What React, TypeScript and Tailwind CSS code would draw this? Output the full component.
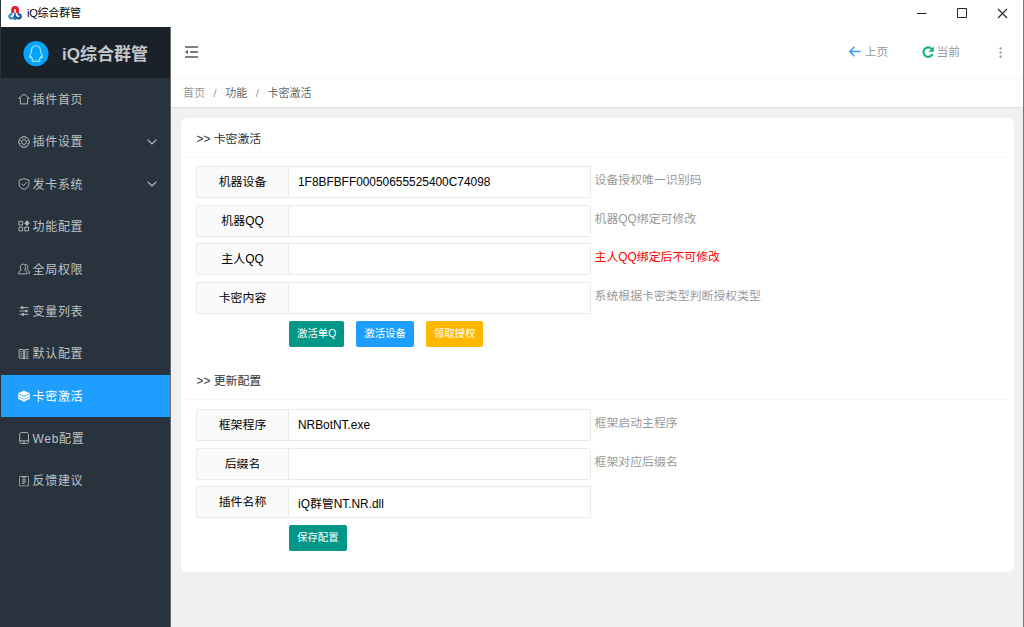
import type {ReactNode} from 'react';
import clsx from 'clsx';

const iconPaths: Record<string, ReactNode> = {
    home: <path d="M8 1.5L.8 7h2.400v7.500h9.600V7h2.400L8 1.500z" />,
    gear: (
        <>
            <path d="M6.400.8h3.200l.4 2 1.900-1 2.200 2.200-1 1.900 2 .5v3.200l-2 .5 1 1.900-2.200 2.200-1.900-1-.4 2H6.400l-.4-2-1.900 1L1.900 12l1-1.900-2-.5V6.400l2-.5-1-1.900 2.200-2.200 1.900 1z" />
            <circle cx="8" cy="8" r="3.200" />
        </>
    ),
    shield: <path d="M8 .8l6.500 2v5.900c0 3-2.900 5.300-6.500 6.500-3.600-1.200-6.500-3.500-6.500-6.500V2.800L8 .8zM4.800 7.600l2.500 2.500 4.200-4.200" />,
    component: (
        <>
            <path d="M1.200 1.700h5v5h-5zM1.200 9.500h5v5h-5zM9 9.500h5v5H9z" />
            <path d="M12 .4l3.700 3.800L12 8 8.300 4.200z" fill="currentColor" stroke="none" />
        </>
    ),
    user: <path d="M.8 14.500c0-3 1.600-4.300 3.500-5C2 6 3 1.500 6.600 1.500S11 6 8.800 9.500c2 .7 3 2 3 5H.8zM9.500 1.800c3.600-.3 5 4 2.300 7 2 .8 3.500 2.300 3.500 5.200h-2" />,
    slider: (
        <>
            <path d="M2 3.500h12M2 8h12M2 12.500h12" />
            <path d="M4.500 1.800h2.600v3.400H4.500zM9.400 6.300H12v3.400H9.400zM5.500 10.800h2.600v3.400H5.500z" fill="currentColor" stroke="none" />
        </>
    ),
    read: <path d="M8 3v11.500M1.500 2h4L8 3v11.500l-2.500-1h-4zM14.500 2h-4L8 3v11.500l2.500-1h4M3.200 5h2.500M3.200 7.700h2.500M3.200 10.500h2.500M10 5.200h4M10 8h4M10 11h4" />,
    layers: (
        <>
            <path d="M8 .6l8 3.700-8 3.800-8-3.800z" fill="currentColor" stroke="none" />
            <path d="M0 5.200l8 3.700 8-3.700v3l-8 3.700-8-3.700z" fill="currentColor" stroke="none" />
            <path d="M0 9.100l8 3.700 8-3.700v2.700l-8 3.800-8-3.800z" fill="currentColor" stroke="none" />
        </>
    ),
    phone: <path d="M4.500.8h7.300c1.300 0 2.200.9 2.200 2.200v10c0 1.300-.9 2.200-2.200 2.200H4.500c-1.300 0-2.300-.9-2.300-2.200V3c0-1.300 1-2.200 2.300-2.200zM2.200 11.800H14M8 12v3" />,
    form: <path d="M2 2h12v12.500H2zM6 1v2.500h4V1M5 6.500h6M5 9h6M5 11.500h3M8 4v8" strokeWidth="1" />,
};

const menuItems = [
    {icon: 'home', label: '插件首页'},
    {icon: 'gear', label: '插件设置', expandable: true},
    {icon: 'shield', label: '发卡系统', expandable: true},
    {icon: 'component', label: '功能配置'},
    {icon: 'user', label: '全局权限'},
    {icon: 'slider', label: '变量列表'},
    {icon: 'read', label: '默认配置'},
    {icon: 'layers', label: '卡密激活', active: true},
    {icon: 'phone', label: 'Web配置'},
    {icon: 'form', label: '反馈建议'},
];

const activationFields = [
    {label: '机器设备', value: '1F8BFBFF00050655525400C74098', hint: '设备授权唯一识别码'},
    {label: '机器QQ', value: '', hint: '机器QQ绑定可修改'},
    {label: '主人QQ', value: '', hint: '主人QQ绑定后不可修改', warn: true},
    {label: '卡密内容', value: '', hint: '系统根据卡密类型判断授权类型'},
];

const updateFields = [
    {label: '框架程序', value: 'NRBotNT.exe', hint: '框架启动主程序'},
    {label: '后缀名', value: '', hint: '框架对应后缀名'},
    {label: '插件名称', value: 'iQ群管NT.NR.dll', hint: ''},
];

interface Field {
    label: string;
    value: string;
    hint: string;
    warn?: boolean;
}

const FieldRow = ({label, value, hint, warn}: Field) => (
    <div className="flex h-8 items-center">
        <label className="flex h-8 w-[93px] shrink-0 items-center justify-center rounded-l-xs border border-[#eaeaea] bg-[#fafafa] pt-0.5 text-black">
            {label}
        </label>
        <input
            className="h-8 w-[302px] shrink-0 rounded-r-xs border border-l-0 border-[#eaeaea] bg-white px-[9px] text-black outline-none"
            defaultValue={value}
        />
        <span className={clsx('ml-[3.500px] pb-0.5 whitespace-nowrap', warn ? 'text-[#ff0000]' : 'text-[#999]')}>{hint}</span>
    </div>
);

const SectionTitle = ({children}: {children: ReactNode}) => (
    <div className="mr-1.5 ml-1 flex h-10 items-center border-b border-[#f6f6f6] pt-1 pl-[12px] text-[#333]">
        {children}
    </div>
);

const TitleBar = () => (
    <div className="flex h-[27px] shrink-0 items-center bg-white pb-px pl-[7px]">
        <svg className="h-[15px] w-[14px]" viewBox="0 0 14 15" fill="none">
            <path d="M4.700 7V3.500c0-1.600.9-2 2.300-2s2.500.4 2.500 2V7" stroke="#e0202c" strokeWidth="3" />
            <path d="M4.500 8C2 8 1.300 9.200 1.300 10.800s3 2.300 4.600.8L8 9.500" stroke="#2f8fd4" strokeWidth="2.200" />
            <path d="M9.500 8c2.500 0 3.300 1.200 3.300 2.800s-3 2.300-4.600.8L6 9.500" stroke="#174f96" strokeWidth="2.200" />
            <path d="M7 6.500V14" stroke="#2463aa" strokeWidth="1.600" />
        </svg>
        <span className="ml-[5px] pt-px text-[11px] tracking-[-0.200px] text-black">iQ综合群管</span>
        <div className="mr-[15.500px] ml-auto flex items-center gap-[30px] text-[#222]">
            <svg className="h-2.5 w-2.5" viewBox="0 0 10 10" stroke="currentColor">
                <path d="M0 5.500h9.500" />
            </svg>
            <svg className="h-2.5 w-2.5" viewBox="0 0 10 10" fill="none" stroke="currentColor">
                <path d="M.5.5h9v9h-9z" />
            </svg>
            <svg className="h-[11px] w-[11px]" viewBox="0 0 11 11" stroke="currentColor" strokeWidth="1.100">
                <path d="M1 1l9 9M10 1l-9 9" />
            </svg>
        </div>
    </div>
);

const Sidebar = () => (
    <aside className="w-[170px] shrink-0 border-r border-[#656c74] bg-[#28333e]">
        <div className="flex h-[51px] items-center bg-[#1b2129] pb-px pl-[22px]">
            <svg className="mt-1 h-[26px] w-[26px]" viewBox="0 0 26 26" fill="none">
                <circle cx="13" cy="12.600" r="12.600" fill="#06a4fa" />
                <path
                    d="M13 4.800c-3 0-4.500 2.200-4.500 5 0 1.300-.4 2-1 3.200-.7 1.500-1 3.300-.4 3.800.5.300 1-.6 1.300-.9.300 1.100.8 1.900 1.400 2.500-1.300.7-1.200 2 .6 2 1.200 0 2-.3 2.600-.8.600.5 1.400.8 2.600.8 1.800 0 1.900-1.300.6-2 .6-.6 1.100-1.400 1.400-2.500.3.300.8 1.200 1.300.9.600-.5.300-2.300-.4-3.800-.6-1.200-1-1.900-1-3.200 0-2.800-1.500-5-4.500-5z"
                    stroke="#a5e8ff"
                    strokeWidth="1.100"
                />
            </svg>
            <span className="mt-[5px] ml-[13px] text-[17px] leading-6 font-bold text-[#c3c5c8]">iQ综合群管</span>
        </div>
        <nav>
            {menuItems.map((item) => (
                <a
                    key={item.label}
                    className={clsx(
                        'flex h-[42.400px] items-center pl-[16.500px] text-xs tracking-[0.700px]',
                        item.active ? 'bg-[#1e9fff] text-white' : 'text-[#bec2c5]'
                    )}
                >
                    <svg
                        className={clsx('mr-[3px] h-3 w-3', !item.active && 'opacity-90')}
                        viewBox="0 0 16 16"
                        fill="none"
                        stroke="currentColor"
                        strokeWidth="1.300"
                    >
                        {iconPaths[item.icon]}
                    </svg>
                    <span className="pt-[1.500px]">{item.label}</span>
                    {item.expandable && (
                        <svg className="mr-[13px] ml-auto h-[6px] w-[10px]" viewBox="0 0 10 6" fill="none" stroke="currentColor" strokeWidth="1.100">
                            <path d="M.6.6L5 5 9.400.6" />
                        </svg>
                    )}
                </a>
            ))}
        </nav>
    </aside>
);

const Header = () => (
    <header className="flex h-[51px] shrink-0 items-center bg-white pr-[20.500px] pb-px pl-[14px] text-[11.700px] text-[#999]">
        <svg className="h-3 w-[13px]" viewBox="0 0 13 12" fill="none" stroke="#555" strokeWidth="1.500">
            <path d="M0 1h13M5 6h8M0 11h13" />
            <path d="M0 6l3-2v4z" fill="#555" stroke="none" />
        </svg>
        <div className="ml-auto flex items-center">
            <svg className="mr-1 h-[11px] w-3" viewBox="0 0 12 11" fill="none" stroke="#3a9cf5" strokeWidth="1.500">
                <path d="M11.500 5.500H1M5.300.8L.9 5.500l4.400 4.700" />
            </svg>
            上页
        </div>
        <div className="ml-[33.500px] flex items-center">
            <svg className="mr-[3px] h-3 w-3" viewBox="0 0 12 12" fill="none">
                <path d="M10.500 8A4.700 4.700 0 1 1 9.500 2.700" stroke="#16b777" strokeWidth="2.200" />
                <path d="M11.900.3v5.500H6.400z" fill="#16b777" />
            </svg>
            当前
        </div>
        <svg className="ml-[37.500px] h-[11px] w-[5px]" viewBox="0 0 5 11" fill="#888">
            <circle cx="2.500" cy="1.300" r="1.100" />
            <circle cx="2.500" cy="5.500" r="1.100" />
            <circle cx="2.500" cy="9.700" r="1.100" />
        </svg>
    </header>
);

const buttonClass = 'h-[26px] rounded-xs px-2 pt-px text-[10.400px] text-white whitespace-nowrap';

export default function App() {
    return (
        <div className="flex h-screen flex-col overflow-hidden border-r border-l border-r-[#777] border-l-[#28333e] bg-[#f0f0f0] font-['Liberation_Sans','Noto_Sans_CJK_SC',sans-serif]">
            <TitleBar />
            <div className="flex min-h-0 flex-1">
                <Sidebar />
                <div className="flex min-w-0 flex-1 flex-col">
                    <Header />
                    <div className="flex h-[30px] shrink-0 items-center border-t border-b border-t-[#f6f6f6] border-b-[#dedede] bg-white pl-3 text-[11px] text-[#666]">
                        <span className="text-[#999]">首页</span>
                        <span className="mx-[8.600px] text-[#999]">/</span>
                        <span>功能</span>
                        <span className="mx-[8.600px] text-[#999]">/</span>
                        <span>卡密激活</span>
                    </div>
                    <main className="mt-[10px] mr-[9px] ml-[9.500px] h-[454px] rounded-md bg-white text-[11.900px]">
                        <SectionTitle>&gt;&gt; 卡密激活</SectionTitle>
                        <div className="flex flex-col gap-[6.600px] pt-2 pl-[15.500px]">
                            {activationFields.map((field) => (
                                <FieldRow key={field.label} {...field} />
                            ))}
                        </div>
                        <div className="flex gap-3 pt-[7px] pl-[108.500px]">
                            <button className={clsx(buttonClass, 'bg-[#009688]')}>激活单Q</button>
                            <button className={clsx(buttonClass, 'bg-[#1e9fff]')}>激活设备</button>
                            <button className={clsx(buttonClass, 'bg-[#ffb800]')}>领取授权</button>
                        </div>
                        <div className="pt-[13.300px]">
                            <SectionTitle>&gt;&gt; 更新配置</SectionTitle>
                        </div>
                        <div className="flex flex-col gap-[6.600px] pt-[9px] pl-[15.500px]">
                            {updateFields.map((field) => (
                                <FieldRow key={field.label} {...field} />
                            ))}
                        </div>
                        <div className="pt-[6.500px] pl-[108.500px]">
                            <button className={clsx(buttonClass, 'bg-[#009688]')}>保存配置</button>
                        </div>
                    </main>
                </div>
            </div>
        </div>
    );
}
